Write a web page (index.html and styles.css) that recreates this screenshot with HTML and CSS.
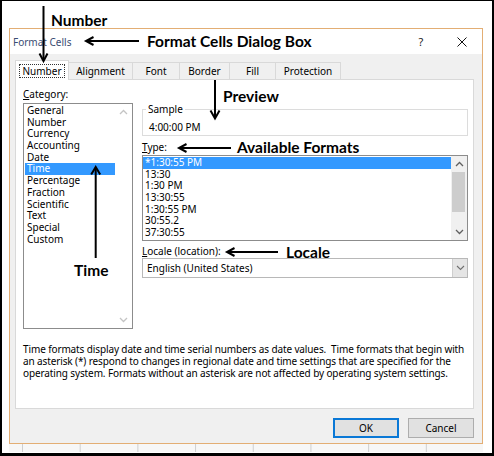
FILE: index.html
```html
<!DOCTYPE html>
<html lang="en">
<head>
<meta charset="utf-8">
<title>Format Cells</title>
<link rel="stylesheet" href="styles.css">
</head>
<body>
<div class="frame">
  <div class="dialog">
    <div class="titlebar">
      <span class="title">Format Cells</span>
      <span class="help">?</span>
      <svg class="close" width="10" height="10" viewBox="0 0 10 10"><path d="M0.5 0.5 L9.5 9.5 M9.5 0.5 L0.5 9.5" stroke="#111" stroke-width="1" fill="none"/></svg>
    </div>
    <div class="body">
      <div class="tabs">
        <div class="tab tab-active"><span class="focus">Number</span></div>
        <div class="tab">Alignment</div>
        <div class="tab">Font</div>
        <div class="tab">Border</div>
        <div class="tab">Fill</div>
        <div class="tab">Protection</div>
      </div>
      <div class="panel">
        <div class="columns">
          <div class="col-left">
            <div class="label"><u>C</u>ategory:</div>
            <div class="listbox cat-list">
              <ul class="items">
                <li class="item">General</li>
                <li class="item">Number</li>
                <li class="item">Currency</li>
                <li class="item">Accounting</li>
                <li class="item">Date</li>
                <li class="item item-selected">Time</li>
                <li class="item">Percentage</li>
                <li class="item">Fraction</li>
                <li class="item">Scientific</li>
                <li class="item">Text</li>
                <li class="item">Special</li>
                <li class="item">Custom</li>
              </ul>
              <div class="scrollbar scrollbar-disabled">
                <div class="sb-btn"><svg width="9" height="6" viewBox="0 0 9 6"><path d="M1 5 L4.5 1.5 L8 5" fill="none" stroke="#c4c4c4" stroke-width="1.3"/></svg></div>
                <div class="sb-btn sb-down"><svg width="9" height="6" viewBox="0 0 9 6"><path d="M1 1 L4.5 4.5 L8 1" fill="none" stroke="#c4c4c4" stroke-width="1.3"/></svg></div>
              </div>
            </div>
          </div>
          <div class="col-right">
            <fieldset class="sample">
              <legend>Sample</legend>
              <div class="sample-value">4:00:00 PM</div>
            </fieldset>
            <div class="label type-label"><u>T</u>ype:</div>
            <div class="listbox type-list">
              <ul class="items">
                <li class="item item-selected">*1:30:55 PM</li>
                <li class="item">13:30</li>
                <li class="item">1:30 PM</li>
                <li class="item">13:30:55</li>
                <li class="item">1:30:55 PM</li>
                <li class="item">30:55.2</li>
                <li class="item">37:30:55</li>
              </ul>
              <div class="scrollbar">
                <div class="sb-btn"><svg width="9" height="6" viewBox="0 0 9 6"><path d="M1 5 L4.5 1.5 L8 5" fill="none" stroke="#606060" stroke-width="1.3"/></svg></div>
                <div class="thumb"></div>
                <div class="sb-btn sb-down"><svg width="9" height="6" viewBox="0 0 9 6"><path d="M1 1 L4.5 4.5 L8 1" fill="none" stroke="#606060" stroke-width="1.3"/></svg></div>
              </div>
            </div>
            <div class="label locale-label"><u>L</u>ocale (location):</div>
            <div class="select">
              <span class="select-text">English (United States)</span>
              <span class="select-btn"><svg width="9" height="6" viewBox="0 0 9 6"><path d="M1 1 L4.5 4.5 L8 1" fill="none" stroke="#707070" stroke-width="1.1"/></svg></span>
            </div>
          </div>
        </div>
        <p class="desc">Time formats display date and time serial numbers as date values.&nbsp; Time formats that begin with<br>an asterisk (*) respond to changes in regional date and time settings that are specified for the<br>operating system. Formats without an asterisk are not affected by operating system settings.</p>
      </div>
      <div class="buttons">
        <button class="btn btn-default">OK</button>
        <button class="btn">Cancel</button>
      </div>
    </div>
  </div>
  <div class="sheet-strip"></div>

  <svg class="arrows" width="494" height="456" viewBox="0 0 494 456">
    <g fill="none" stroke="#000" stroke-width="2">
      <path d="M43.5 6 V60"/>
      <path d="M39.5 53.5 L43.5 61 L47.5 53.5"/>
      <path d="M87 41 H139"/>
      <path d="M93.5 37 L86 41 L93.5 45"/>
      <path d="M215 80 V117"/>
      <path d="M210.5 110.5 L215 118.5 L219.5 110.5"/>
      <path d="M180 148 H231"/>
      <path d="M186.5 144 L179 148 L186.5 152"/>
      <path d="M228 252 H278"/>
      <path d="M234.5 248 L227 252 L234.5 256"/>
      <path d="M95.7 168 V258"/>
      <path d="M91.2 174.5 L95.7 167 L100.2 174.5"/>
    </g>
  </svg>
  <span class="note note-number">Number</span>
  <span class="note note-dialog">Format Cells Dialog Box</span>
  <span class="note note-preview">Preview</span>
  <span class="note note-formats">Available Formats</span>
  <span class="note note-locale">Locale</span>
  <span class="note note-time">Time</span>
</div>
</body>
</html>
```
FILE: styles.css
```css
html, body {
  margin: 0;
  padding: 0;
  background: #fff;
}

.frame {
  position: relative;
  width: 494px;
  height: 456px;
  box-sizing: border-box;
  padding: 28px 0 0 9px;
  background: #fff;
  box-shadow: inset 2px 0 0 #000, inset -2px 0 0 #000, inset 0 1px 0 #000, inset 0 -3px 0 #000;
  overflow: hidden;
  font-family: "Noto Sans", "Open Sans", sans-serif;
  font-size: 10px;
  color: #000;
}

/* ---------- dialog ---------- */
.dialog {
  width: 474px;
  box-sizing: border-box;
  border: 1px solid #e3ae74;
  background: #f0f0f0;
}

.titlebar {
  height: 25px;
  background: #fff;
  display: flex;
  align-items: center;
  padding: 0 15px 0 3px;
}

.title {
  flex: 1;
  color: #3a4c72;
  font-size: 10px;
}

.help {
  width: 12px;
  text-align: center;
  margin-right: 30px;
  font-size: 11px;
  color: #222;
}

.close {
  display: block;
}

.body {
  padding: 6px 8px 5px 5px;
}

/* ---------- tabs ---------- */
.tabs {
  display: grid;
  grid-template-columns: 54px 64px 47px 50px 46px 65px;
  align-items: end;
  height: 20px;
  margin-bottom: -1px;
  position: relative;
}

.tab {
  height: 18px;
  box-sizing: border-box;
  border: 1px solid #d9d9d9;
  border-left: none;
  background: #f0f0f0;
  text-align: center;
  line-height: 16px;
  white-space: nowrap;
}

.tab:first-child {
  border-left: 1px solid #d9d9d9;
}

.tab-active {
  height: 20px;
  background: #fff;
  border-bottom: none;
  padding-top: 4px;
  line-height: 12px;
}

.focus {
  display: inline-block;
  padding: 0 2px;
  outline: 1px dotted #333;
}

/* ---------- panel ---------- */
.panel {
  height: 330px;
  box-sizing: border-box;
  border: 1px solid #d9d9d9;
  background: #fff;
  padding: 8px 5px 0 7px;
}

.columns {
  display: grid;
  grid-template-columns: 110px 326px;
  column-gap: 9px;
  align-items: start;
}

.label {
  line-height: 12px;
  height: 12px;
  white-space: nowrap;
}

.listbox {
  display: flex;
  box-sizing: border-box;
  border: 1px solid #8c8c8c;
  background: #fff;
}

.cat-list {
  height: 226px;
  margin-top: 3px;
}

.items {
  list-style: none;
  margin: 0;
  padding: 1px 0 0 1px;
  flex: 1;
  min-width: 0;
}

.item {
  height: 11.7px;
  line-height: 11.7px;
  padding-left: 2px;
  white-space: nowrap;
}

.item-selected {
  background: #3399ff;
  color: #fff;
}

.scrollbar {
  width: 17px;
  display: flex;
  flex-direction: column;
}

.sb-btn {
  height: 16px;
  display: flex;
  align-items: center;
  justify-content: center;
}

.sb-down {
  margin-top: auto;
}

.type-list {
  height: 86px;
  margin-top: 2px;
}

.type-list .items {
  padding-left: 0;
}

.type-list .scrollbar {
  width: 16px;
  background: #f0f0f0;
}

.thumb {
  height: 40px;
  width: 13px;
  margin-left: 1px;
  background: #cdcdcd;
}

/* ---------- right column ---------- */
.sample {
  margin: 15px 0 0 0;
  padding: 0 0 2px 3px;
  border: 1px solid #dcdcdc;
  min-width: 0;
}

.sample legend {
  padding: 0 2px;
  line-height: 12px;
}

.sample-value {
  margin-top: 6px;
  line-height: 12px;
  padding-left: 3px;
}

.type-label {
  margin-top: 5px;
}

.locale-label {
  margin-top: 4px;
}

.select {
  margin-top: 1px;
  height: 20px;
  box-sizing: border-box;
  border: 1px solid #b8b8b8;
  display: flex;
  align-items: center;
  padding-left: 4px;
  background: #fff;
}

.select-text {
  flex: 1;
  white-space: nowrap;
}

.select-btn {
  width: 15px;
  height: 18px;
  box-sizing: border-box;
  background: #e5e5e5;
  border-left: 1px solid #cfcfcf;
  display: flex;
  align-items: center;
  justify-content: center;
}

.desc {
  margin: 14px 0 0;
  line-height: 12px;
  white-space: nowrap;
  letter-spacing: -0.12px;
}

/* ---------- buttons ---------- */
.buttons {
  display: flex;
  justify-content: flex-end;
  gap: 9px;
  margin-top: 9px;
}

.btn {
  width: 66px;
  height: 20px;
  box-sizing: border-box;
  padding: 0;
  font: inherit;
  color: #000;
  background: #e1e1e1;
  border: 1px solid #adadad;
  line-height: 18px;
}

.btn-default {
  border: 2px solid #0a78d6;
  line-height: 16px;
}

/* ---------- sheet strip below dialog ---------- */
.sheet-strip {
  width: 474px;
  height: 8px;
  background-color: #f7f7f7;
  background-image: linear-gradient(90deg, #cfcfcf 0 1px, transparent 1px);
  background-size: 57.7px 100%;
  background-position: 13px 0;
  background-repeat: repeat-x;
}

/* ---------- annotations ---------- */
.arrows {
  position: absolute;
  left: 0;
  top: 0;
  pointer-events: none;
}

.note {
  position: absolute;
  font-family: Lato, "Liberation Sans", sans-serif;
  font-weight: 700;
  font-size: 15.5px;
  line-height: 15px;
  white-space: nowrap;
  color: #000;
}

.note-number { left: 51px; top: 12.5px; }
.note-dialog { left: 147px; top: 33.5px; }
.note-preview { left: 223px; top: 88.5px; }
.note-formats { left: 237px; top: 140px; }
.note-locale { left: 286px; top: 244.5px; }
.note-time { left: 74px; top: 262.5px; }
```
